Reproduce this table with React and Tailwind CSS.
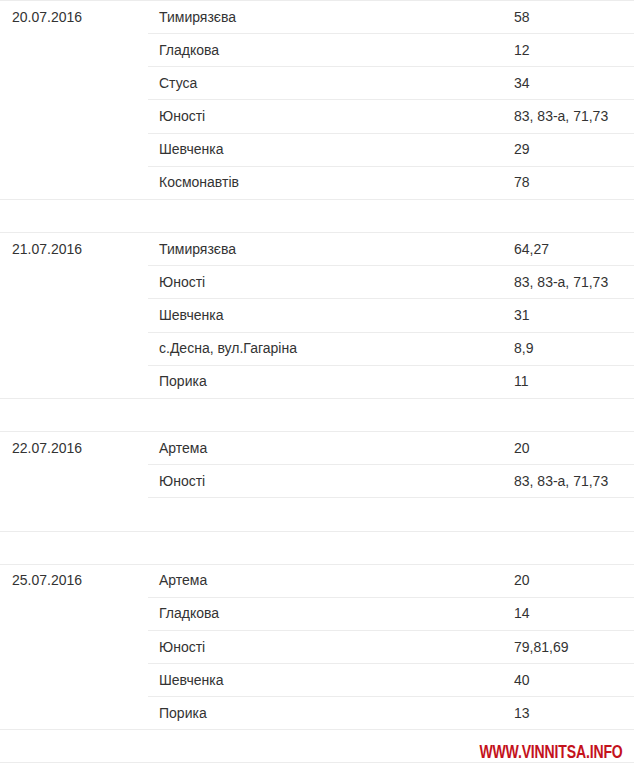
import React from "react";

const groups = [
  {
    date: "20.07.2016",
    rows: [
      ["Тимирязєва", "58"],
      ["Гладкова", "12"],
      ["Стуса", "34"],
      ["Юності", "83, 83-а, 71,73"],
      ["Шевченка", "29"],
      ["Космонавтів", "78"],
    ],
  },
  {
    date: "21.07.2016",
    rows: [
      ["Тимирязєва", "64,27"],
      ["Юності", "83, 83-а, 71,73"],
      ["Шевченка", "31"],
      ["с.Десна, вул.Гагаріна", "8,9"],
      ["Порика", "11"],
    ],
  },
  {
    date: "22.07.2016",
    rows: [
      ["Артема", "20"],
      ["Юності", "83, 83-а, 71,73"],
      ["", ""],
    ],
  },
  {
    date: "25.07.2016",
    rows: [
      ["Артема", "20"],
      ["Гладкова", "14"],
      ["Юності", "79,81,69"],
      ["Шевченка", "40"],
      ["Порика", "13"],
    ],
  },
];

const line = "border-t border-[#ececec]";

function Group({ date, rows }) {
  return (
    <div className="flex">
      <div className={`w-[148px] shrink-0 pl-3 ${line}`}>
        <div className="h-[32.17px] flex items-center">{date}</div>
      </div>
      <div className="flex-1">
        {rows.map(([street, num], i) => (
          <div key={i} className={`flex h-[33.17px] items-center ${line}`}>
            <div className="w-[355px] shrink-0 pl-[11px]">{street}</div>
            <div className="flex-1 pl-[11px]">{num}</div>
          </div>
        ))}
      </div>
    </div>
  );
}

function EmptyRow() {
  return <div className={`h-[33.17px] ${line}`} />;
}

export default function App() {
  return (
    <div
      className="w-[634px] h-[768px] bg-white text-[14px] text-[#333] overflow-hidden"
      style={{ fontFamily: '"Liberation Sans", Arial, sans-serif' }}
    >
      {groups.map((g, i) => (
        <React.Fragment key={g.date}>
          <Group date={g.date} rows={g.rows} />
          <EmptyRow />
        </React.Fragment>
      ))}
      <div className={`${line} -mt-[33.17px] h-[33.17px] flex items-end justify-end pr-[11px] pb-[1px] border-b`}>
        <span className="font-bold text-[18px] leading-none text-[#c4121c] scale-x-[0.78] origin-right tracking-[-0.2px]">
          WWW.VINNITSA.INFO
        </span>
      </div>
    </div>
  );
}
